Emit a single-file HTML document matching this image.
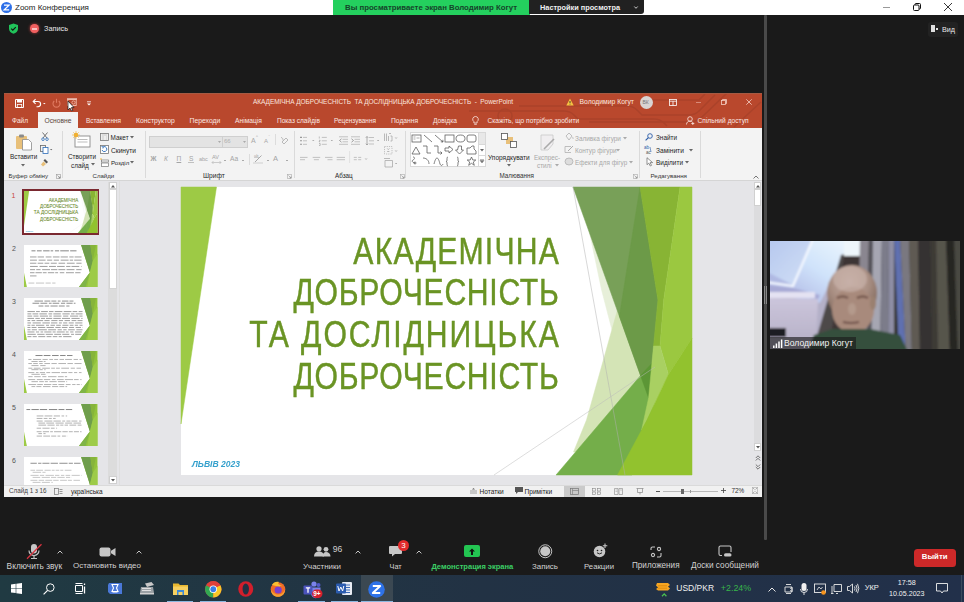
<!DOCTYPE html>
<html><head><meta charset="utf-8">
<style>
*{margin:0;padding:0;box-sizing:border-box}
html,body{width:964px;height:602px;overflow:hidden;background:#1a1a1a;font-family:"Liberation Sans",sans-serif}
.a{position:absolute}
.t{position:absolute;white-space:nowrap;line-height:1}
svg{position:absolute;overflow:visible}
</style></head><body>

<!-- ===== Zoom title bar ===== -->
<div class="a" style="left:0;top:0;width:964px;height:15px;background:#fff"></div>
<svg style="left:1px;top:2px" width="11" height="11" viewBox="0 0 11 11"><circle cx="5.5" cy="5.5" r="5.5" fill="#2d6fe8"/><path d="M3 3.2h5L3.2 7.8h5" stroke="#fff" stroke-width="1.3" fill="none"/></svg>
<div class="t" style="left:15px;top:4.1px;font-size:8px;color:#222">Zoom Конференция</div>
<div class="a" style="left:883px;top:7px;width:7px;height:1px;background:#999"></div>
<svg style="left:913px;top:3px" width="8" height="8" viewBox="0 0 8 8"><rect x="0.5" y="2" width="5.5" height="5.5" rx="1" fill="none" stroke="#111" stroke-width="1"/><path d="M2 2V1.5a1 1 0 0 1 1-1h3.5a1 1 0 0 1 1 1V5a1 1 0 0 1-1 1H6" fill="none" stroke="#111" stroke-width="1"/></svg>
<svg style="left:944px;top:3px" width="8" height="8" viewBox="0 0 8 8"><path d="M0 0L8 8M8 0L0 8" stroke="#222" stroke-width="0.9"/></svg>

<!-- green share banner -->
<div class="a" style="left:333px;top:0;width:197px;height:15px;background:#24d05e"></div>
<div class="t" style="left:345px;top:3.7px;font-size:7.8px;font-weight:bold;color:#15442a">Вы просматриваете экран Володимир Когут</div>
<div class="a" style="left:529px;top:0;width:115px;height:14px;background:#212121;border-radius:0 0 3px 0"></div>
<div class="t" style="left:540px;top:4.1px;font-size:7.35px;font-weight:bold;color:#f0f0f0">Настройки просмотра</div>
<svg style="left:634px;top:6px" width="4" height="3" viewBox="0 0 4 3"><path d="M0.3 0.5L2 2.3L3.7 0.5" stroke="#ddd" stroke-width="0.9" fill="none"/></svg>

<!-- top-left zoom status -->
<svg style="left:8px;top:23px" width="11" height="11" viewBox="0 0 11 11"><path d="M5.5 0.5L10 2v3.5c0 2.8-2 4.5-4.5 5.2C3 10 1 8.3 1 5.5V2z" fill="#21c35a"/><path d="M3.2 5.6l1.6 1.6 3-3" stroke="#111" stroke-width="1.1" fill="none"/></svg>
<div class="a" style="left:30px;top:24px;width:9px;height:9px;border-radius:50%;background:#f06060;box-shadow:0 0 3px #c04040"></div>
<div class="a" style="left:32px;top:27.5px;width:5px;height:2px;background:#fff;opacity:.6"></div>
<div class="t" style="left:44px;top:25.4px;font-size:7.3px;color:#e8e8e8">Запись</div>

<!-- Вид button -->
<div class="a" style="left:928px;top:22px;width:30px;height:15px;background:#222;border-radius:3px"></div>
<div class="a" style="left:931px;top:25px;width:4px;height:7px;background:#e0e0e0"></div>
<div class="a" style="left:936px;top:27.5px;width:2px;height:2px;background:#e0e0e0"></div>
<div class="t" style="left:942px;top:26.1px;font-size:7.2px;color:#e8e8e8">Вид</div>

<!-- separator -->
<div class="a" style="left:764px;top:15px;width:3px;height:525px;background:#4a4a4a;border-radius:1px"></div>

<!-- ===== PowerPoint window ===== -->
<div class="a" style="left:4px;top:93px;width:758px;height:404px;background:#e5e5e8"></div>
<div class="a" style="left:4px;top:93px;width:758px;height:35px;background:#b9482d;border-top:1px solid #a65a42;overflow:hidden">
 <svg style="left:-1px;top:-1px" width="758" height="35" viewBox="4 94 758 35"><g stroke="#a9422a" stroke-width="1.6" fill="none" opacity=".85">
 <path d="M470 112H565Q571 112 575 116L579 120H655Q661 120 665 124L668 127"/>
 <path d="M520 107H628Q634 107 638 111L643 116H690Q696 116 700 112L716 96"/>
 <path d="M590 123H690Q698 123 704 117L728 94"/>
 <path d="M650 101H700L706 95"/>
 <circle cx="506" cy="117" r="7"/>
 <path d="M735 128L762 103"/>
</g></svg>
</div>
<div class="a" style="left:4px;top:128px;width:758px;height:53px;background:#f3f3f3;border-bottom:1px solid #d5d5d5"></div>
<div class="a" style="left:38px;top:112px;width:40px;height:17px;background:#f3f3f3"></div>

<!-- quick access -->
<svg style="left:15px;top:99px" width="9" height="9" viewBox="0 0 9 9"><path d="M.5 .5h8v8h-8z" fill="none" stroke="#fff" stroke-width="1"/><rect x="2" y=".5" width="5" height="3" fill="#fff"/><rect x="2.3" y="5.5" width="4.4" height="3" fill="none" stroke="#fff" stroke-width=".8"/></svg>
<svg style="left:32px;top:98px" width="14" height="10" viewBox="0 0 14 10"><path d="M1.5 3.5h4.5a2.6 2.6 0 0 1 0 5.2H4.5" fill="none" stroke="#fff" stroke-width="1.1"/><path d="M3.6 1.2L1.2 3.5l2.4 2.3" fill="none" stroke="#fff" stroke-width="1.1"/><path d="M11 5l1.3 1.3L13.6 5z" fill="#fff"/></svg>
<svg style="left:52px;top:98px" width="9" height="10" viewBox="0 0 9 10"><path d="M6.8 3a3.5 3.5 0 1 1-4.6 0" fill="none" stroke="#e07a60" stroke-width="1.1"/><path d="M4.5 .8v4" stroke="#e07a60" stroke-width="1.1"/></svg>
<svg style="left:66px;top:98px" width="12" height="10" viewBox="0 0 12 10"><path d="M1 1h10" stroke="#fff" stroke-width="1"/><rect x="1.8" y="1.5" width="8.4" height="6" fill="none" stroke="#f3c0b0" stroke-width=".9"/><circle cx="7.5" cy="4.5" r="1.6" fill="none" stroke="#f3c0b0" stroke-width=".8"/></svg>
<svg style="left:67px;top:100px" width="8" height="12" viewBox="0 0 8 12"><path d="M1 1v9l2-2 1.5 3 1.3-.6L4.4 7.6H7z" fill="#fff" stroke="#111" stroke-width=".7"/></svg>
<svg style="left:86px;top:101px" width="6" height="5" viewBox="0 0 6 5"><path d="M1 .8h4" stroke="#fff" stroke-width=".8"/><path d="M1 2.5L3 4.5 5 2.5z" fill="#fff"/></svg>

<div class="t" style="left:253px;top:98.5px;font-size:6.5px;color:#fbe5df;letter-spacing:-.05px">АКАДЕМІЧНА ДОБРОЧЕСНІСТЬ &nbsp;ТА ДОСЛІДНИЦЬКА ДОБРОЧЕСНІСТЬ &nbsp;- &nbsp;PowerPoint</div>
<svg style="left:566px;top:98px" width="8" height="8" viewBox="0 0 8 8"><path d="M4 .5L7.7 7.5H.3z" fill="#f5c342"/><path d="M4 3v2.3" stroke="#333" stroke-width=".9"/><circle cx="4" cy="6.4" r=".45" fill="#333"/></svg>
<div class="t" style="left:579.5px;top:98.5px;font-size:6.8px;color:#fbe5df">Володимир Когут</div>
<div class="a" style="left:640px;top:96px;width:13px;height:13px;border-radius:50%;background:#d9d4d3"></div>
<div class="t" style="left:642.5px;top:99.5px;font-size:5px;color:#777">ВК</div>
<svg style="left:669px;top:99px" width="8" height="7" viewBox="0 0 8 7"><rect x=".5" y=".5" width="7" height="6" fill="none" stroke="#fff" stroke-width=".8"/><path d="M.5 2.2h7M4 2.2v4.3" stroke="#fff" stroke-width=".8"/></svg>
<div class="a" style="left:696px;top:102px;width:5px;height:1px;background:#d88a78"></div>
<svg style="left:721px;top:99px" width="6" height="6" viewBox="0 0 6 6"><rect x=".5" y="1.5" width="4" height="4" fill="none" stroke="#f6d0c5" stroke-width=".8"/><path d="M1.5 1.5V.5h4v4h-1" fill="none" stroke="#f6d0c5" stroke-width=".8"/></svg>
<svg style="left:746px;top:99px" width="6" height="6" viewBox="0 0 6 6"><path d="M.3 .3l5.4 5.4M5.7 .3L.3 5.7" stroke="#f6d0c5" stroke-width=".8"/></svg>

<!-- tabs -->
<div class="t" style="left:12px;top:118.4px;font-size:6.5px;color:#fbe7e2">Файл</div>
<div class="t" style="left:44.5px;top:118.4px;font-size:6.7px;color:#5a4540">Основне</div>
<div class="t" style="left:86px;top:118.4px;font-size:6.4px;color:#fbe7e2">Вставлення</div>
<div class="t" style="left:136px;top:118.4px;font-size:6.8px;color:#fbe7e2">Конструктор</div>
<div class="t" style="left:189.5px;top:118.4px;font-size:6.8px;color:#fbe7e2">Переходи</div>
<div class="t" style="left:235px;top:118.4px;font-size:6.7px;color:#fbe7e2">Анімація</div>
<div class="t" style="left:277px;top:118.4px;font-size:6.55px;color:#fbe7e2">Показ слайдів</div>
<div class="t" style="left:334px;top:118.4px;font-size:6.45px;color:#fbe7e2">Рецензування</div>
<div class="t" style="left:391px;top:118.4px;font-size:6.7px;color:#fbe7e2">Подання</div>
<div class="t" style="left:433px;top:118.4px;font-size:6.65px;color:#fbe7e2">Довідка</div>
<svg style="left:472px;top:116px" width="7" height="9" viewBox="0 0 7 9"><path d="M3.5 .5a2.8 2.8 0 0 0-1.6 5.1V7h3.2V5.6A2.8 2.8 0 0 0 3.5 .5z" fill="none" stroke="#fbe7e2" stroke-width=".8"/><path d="M2.2 8.3h2.6" stroke="#fbe7e2" stroke-width=".8"/></svg>
<div class="t" style="left:487.5px;top:118.4px;font-size:6.65px;color:#fbe7e2">Скажіть, що потрібно зробити</div>
<svg style="left:686px;top:116px" width="9" height="9" viewBox="0 0 9 9"><circle cx="4" cy="3" r="2.3" fill="none" stroke="#fbe7e2" stroke-width=".8"/><path d="M.5 8.5c0-2.2 1.5-3.3 3.5-3.3 1 0 1.8.2 2.4.7" fill="none" stroke="#fbe7e2" stroke-width=".8"/><path d="M6.8 6v3M5.3 7.5h3" stroke="#fbe7e2" stroke-width=".8"/></svg>
<div class="t" style="left:697.5px;top:118.4px;font-size:6.65px;color:#fbe7e2">Спільний доступ</div>

<!-- ribbon body -->
<!-- Буфер обміну -->
<svg style="left:15px;top:133px" width="18" height="18" viewBox="0 0 18 18"><rect x="1" y="3" width="11" height="13" rx="1" fill="#e8c07a"/><rect x="4" y="1.5" width="5" height="3" rx="1" fill="#8a8a8a"/><path d="M7.5 6.5h6l3 3V17h-9z" fill="#fff" stroke="#8a8a8a" stroke-width=".8"/></svg>
<div class="t" style="left:10px;top:153.5px;font-size:6.4px;color:#262626">Вставити</div>
<svg style="left:21px;top:164px" width="4" height="3" viewBox="0 0 4 3"><path d="M0 0h4L2 2.5z" fill="#666"/></svg>
<div class="t" style="left:8.5px;top:173.0px;font-size:6.2px;color:#333">Буфер обміну</div>
<svg style="left:56px;top:174px" width="5" height="5" viewBox="0 0 5 5"><rect x=".5" y=".5" width="4" height="4" fill="none" stroke="#999" stroke-width=".6"/><path d="M1.5 1.5l2.5 2.5M4 2.5v1.5H2.5" stroke="#777" stroke-width=".6" fill="none"/></svg>
<svg style="left:41px;top:132px" width="8" height="9" viewBox="0 0 8 9"><path d="M1.5 .5L6 6M6.5 .5L2 6" stroke="#555" stroke-width=".8"/><circle cx="2" cy="7.2" r="1.3" fill="none" stroke="#2b6cb8" stroke-width=".8"/><circle cx="6" cy="7.2" r="1.3" fill="none" stroke="#2b6cb8" stroke-width=".8"/></svg>
<svg style="left:40px;top:145px" width="13" height="9" viewBox="0 0 13 9"><rect x=".5" y=".5" width="5" height="6" fill="none" stroke="#666" stroke-width=".8"/><rect x="3" y="2.5" width="5" height="6" fill="#fff" stroke="#2b6cb8" stroke-width=".8"/><path d="M10 4l1.2 1.2L12.4 4z" fill="#666"/></svg>
<svg style="left:40px;top:158px" width="9" height="9" viewBox="0 0 9 9"><path d="M5 1l3 3-1.5 1.5-3-3z" fill="#555"/><path d="M3.5 3.5L6 6 3 8.5 1 6.5z" fill="#e8c07a"/></svg>
<div class="a" style="left:62px;top:131px;width:1px;height:47px;background:#dadada"></div>
<!-- Слайди -->
<svg style="left:72px;top:131px" width="19" height="17" viewBox="0 0 19 17"><rect x="3" y="5" width="15" height="11" fill="#fff" stroke="#8a8a8a" stroke-width=".9"/><path d="M5.5 8.5h10M5.5 11h10" stroke="#bdbdbd" stroke-width="1.2"/><circle cx="4" cy="4" r="2.2" fill="#f0b030"/><path d="M4 0v8M0 4h8M1.2 1.2l5.6 5.6M6.8 1.2L1.2 6.8" stroke="#f0b030" stroke-width=".6"/></svg>
<div class="t" style="left:68px;top:153.5px;font-size:6.4px;color:#262626">Створити</div>
<div class="t" style="left:71px;top:162.5px;font-size:6.4px;color:#262626">слайд</div>
<svg style="left:91px;top:163px" width="4" height="3" viewBox="0 0 4 3"><path d="M0 0h4L2 2.5z" fill="#666"/></svg>
<div class="t" style="left:92.5px;top:173.0px;font-size:6.1px;color:#333">Слайди</div>
<svg style="left:100px;top:133px" width="9" height="8" viewBox="0 0 9 8"><rect x=".5" y=".5" width="8" height="7" fill="#fff" stroke="#777" stroke-width=".8"/><path d="M1.5 2h6M1.5 4h3M5.5 4h2M1.5 6h3M5.5 6h2" stroke="#aaa" stroke-width=".8"/></svg>
<div class="t" style="left:110.5px;top:134.8px;font-size:6.4px;color:#262626">Макет</div>
<svg style="left:130px;top:136px" width="4" height="3" viewBox="0 0 4 3"><path d="M0 0h4L2 2.5z" fill="#666"/></svg>
<svg style="left:100px;top:145px" width="9" height="9" viewBox="0 0 9 9"><rect x=".5" y=".5" width="8" height="8" fill="#fff" stroke="#777" stroke-width=".8"/><path d="M2 5a2.5 2.5 0 1 0 1-3" fill="none" stroke="#2b6cb8" stroke-width=".9"/><path d="M1.5 1.5l1.7.3-.3 1.7" fill="none" stroke="#2b6cb8" stroke-width=".8"/></svg>
<div class="t" style="left:111px;top:147.8px;font-size:6.6px;color:#262626">Скинути</div>
<svg style="left:100px;top:158px" width="9" height="9" viewBox="0 0 9 9"><path d="M0 1h2" stroke="#f0b030" stroke-width=".9"/><rect x="1.5" y="2" width="7" height="2" fill="#fff" stroke="#777" stroke-width=".7"/><rect x="1.5" y="5" width="7" height="3.5" fill="#fff" stroke="#777" stroke-width=".7"/></svg>
<div class="t" style="left:111px;top:159.8px;font-size:6.1px;color:#262626">Розділ</div>
<svg style="left:130px;top:161px" width="4" height="3" viewBox="0 0 4 3"><path d="M0 0h4L2 2.5z" fill="#666"/></svg>
<div class="a" style="left:144.5px;top:131px;width:1px;height:47px;background:#dadada"></div>
<!-- Шрифт -->
<div class="a" style="left:148.5px;top:135.5px;width:74px;height:12px;background:#e3e3e3;border:1px solid #cfcfcf"></div>
<div class="a" style="left:222px;top:135.5px;width:25.5px;height:12px;background:#e3e3e3;border:1px solid #cfcfcf"></div>
<svg style="left:218px;top:140.5px" width="3" height="2" viewBox="0 0 3 2"><path d="M0 0h3L1.5 2z" fill="#aaa"/></svg>
<svg style="left:243px;top:140.5px" width="3" height="2" viewBox="0 0 3 2"><path d="M0 0h3L1.5 2z" fill="#aaa"/></svg>
<div class="t" style="left:224px;top:137.5px;font-size:6px;color:#b0b0b0">66</div>
<div class="t" style="left:251px;top:137.0px;font-size:7px;color:#a8a8a8">A</div><div class="t" style="left:256px;top:134.5px;font-size:4px;color:#a8a8a8">^</div>
<div class="t" style="left:264px;top:138.0px;font-size:6px;color:#a8a8a8">A</div><div class="t" style="left:268.5px;top:134.5px;font-size:4px;color:#a8a8a8">ˇ</div>
<div class="a" style="left:274.5px;top:134px;width:1px;height:11px;background:#dcdcdc"></div>
<svg style="left:280px;top:136px" width="9" height="9" viewBox="0 0 9 9"><path d="M1 1.5c1.5 0 2 1.5 2 3" stroke="#aaa" stroke-width=".8" fill="none"/><path d="M4 8l4-4-2-2-4 4z" fill="none" stroke="#aaa" stroke-width=".8"/></svg>
<div class="t" style="left:150.5px;top:155.5px;font-size:6.6px;color:#a4a4a4;font-weight:bold">Ж</div>
<div class="t" style="left:164px;top:155.5px;font-size:6.6px;color:#a4a4a4;font-style:italic">К</div>
<div class="t" style="left:176.5px;top:155.5px;font-size:6.6px;color:#a4a4a4;text-decoration:underline">П</div>
<div class="t" style="left:189px;top:155.5px;font-size:6.6px;color:#a4a4a4">S</div><div class="a" style="left:188px;top:162.0px;width:6px;height:1px;background:#c0c0c0"></div>
<div class="t" style="left:199px;top:156.5px;font-size:5.5px;color:#a4a4a4">abc</div>
<div class="t" style="left:212px;top:155.0px;font-size:5.5px;color:#a4a4a4">AV</div><svg style="left:212px;top:161.0px" width="9" height="3" viewBox="0 0 9 3"><path d="M0 1.5h9M1.5 0L0 1.5 1.5 3M7.5 0L9 1.5 7.5 3" stroke="#b0b0b0" stroke-width=".6" fill="none"/></svg>
<div class="a" style="left:223.5px;top:159.5px;width:2px;height:1px;background:#aaa"></div>
<div class="t" style="left:230px;top:155.5px;font-size:6.6px;color:#a4a4a4">Aa</div>
<div class="a" style="left:241.5px;top:159.5px;width:2px;height:1px;background:#aaa"></div>
<div class="a" style="left:249px;top:154.0px;width:1px;height:11px;background:#dcdcdc"></div>
<svg style="left:253px;top:153.0px" width="10" height="11" viewBox="0 0 10 11"><path d="M1 4.5h5" stroke="#bbb" stroke-width=".7"/><text x="1" y="4" font-size="4" fill="#aaa" font-family="Liberation Sans">ab</text><path d="M2 9L8.5 2.5" stroke="#aaa" stroke-width="1"/><path d="M0 10h10" stroke="#d6d6d6" stroke-width="1.2"/></svg>
<div class="a" style="left:266.5px;top:159.5px;width:2px;height:1px;background:#aaa"></div>
<div class="t" style="left:273px;top:155.0px;font-size:7.5px;color:#a4a4a4">A</div>
<div class="a" style="left:285.5px;top:159.5px;width:2px;height:1px;background:#aaa"></div>
<div class="t" style="left:203px;top:173.0px;font-size:6.6px;color:#262626">Шрифт</div>
<svg style="left:287px;top:174px" width="5" height="5" viewBox="0 0 5 5"><rect x=".5" y=".5" width="4" height="4" fill="none" stroke="#aaa" stroke-width=".6"/><path d="M1.5 1.5l2.5 2.5M4 2.5v1.5H2.5" stroke="#888" stroke-width=".6" fill="none"/></svg>
<div class="a" style="left:294px;top:131px;width:1px;height:47px;background:#dadada"></div>
<!-- Абзац -->
<svg style="left:295px;top:130px" width="110" height="40" viewBox="0 0 110 40" fill="none" stroke="#b4b4b4" stroke-width=".8">
 <path d="M5 7.4h2M5 10.8h2M5 14.3h2" stroke="#999" stroke-width="1.1"/><path d="M8 7.4h4M8 10.8h4M8 14.3h4"/>
 <path d="M17.5 10l.8.9.8-.9" stroke="#999"/>
 <path d="M24.3 6.5v2M24 10.3h1.2l-1.2 1.5h1.2M24 13.5h1.2v2h-1.2" stroke="#999" stroke-width=".6"/><path d="M26.8 7.4h5M26.8 10.8h5M26.8 14.3h5"/>
 <path d="M36 10l.8.9.8-.9" stroke="#999"/>
 <path d="M44 6.8h9M47.5 9.3h5.5M47.5 11.8h5.5M44 14.3h9"/><path d="M46.5 8.8L44.5 10.5l2 1.7" stroke="#888"/>
 <path d="M56 6.8h9M59.5 9.3h5.5M59.5 11.8h5.5M56 14.3h9"/><path d="M56.5 8.8l2 1.7-2 1.7" stroke="#888"/>
 <path d="M72 6.5v8.5M70.8 7.8L72 6.5l1.2 1.3M70.8 13.7L72 15l1.2-1.3" stroke="#999"/><path d="M74 7.5h5M74 10.8h5M74 14h5"/>
 <path d="M82.3 10l.8.9.8-.9" stroke="#999"/>
 <path d="M5 27.4h7.5M5 29.7h5"/><path d="M17.7 27.4h7.5M18.9 29.7h5"/><path d="M30 27.4h7.5M32.5 29.7h5"/><path d="M41.7 27.4h8.3M41.7 29.7h8.3"/>
 <path d="M54.6 21v12" stroke="#dcdcdc"/>
 <path d="M58.8 27.4h3M63.2 27.4h3M58.8 29.7h3M63.2 29.7h3"/><path d="M70.3 28.5l.8.9.8-.9" stroke="#999"/>
 <path d="M89.5 3.5v7.5M91.5 3.5v7.5M93.5 6v5M95.5 6h1.5v5h-1.5M94 4l1-1 1 1" stroke="#aaa"/><path d="M100.3 7.5l.8.9.8-.9" stroke="#999"/>
 <path d="M89.5 16.5h7.5v7.5h-7.5z" stroke-dasharray="1.2 1"/><path d="M92.3 18.5l1 1 1-1M92.3 22l1-1 1 1" stroke="#999"/><path d="M100.3 20.5l.8.9.8-.9" stroke="#999"/>
 <path d="M89 28.5h6M90 30.5h7.5v6.5H90z" stroke="#aaa"/><path d="M100.3 33l.8.9.8-.9" stroke="#999"/>
</svg>
<div class="t" style="left:335px;top:172.5px;font-size:6.3px;color:#262626">Абзац</div>
<svg style="left:400px;top:174px" width="5" height="5" viewBox="0 0 5 5"><rect x=".5" y=".5" width="4" height="4" fill="none" stroke="#aaa" stroke-width=".6"/><path d="M1.5 1.5l2.5 2.5M4 2.5v1.5H2.5" stroke="#888" stroke-width=".6" fill="none"/></svg>
<div class="a" style="left:405px;top:131px;width:1px;height:47px;background:#dadada"></div>
<!-- Малювання -->
<div class="a" style="left:409.5px;top:132px;width:76px;height:34.5px;background:#fff;border:1px solid #d8d8d8"></div>
<svg style="left:410px;top:133px" width="68" height="33" viewBox="0 0 68 33" stroke="#555" stroke-width=".75" fill="none">
 <rect x="2" y="2" width="9" height="7"/><path d="M3.5 4h2M3.5 6h2M6.5 5h3" stroke="#777" stroke-width=".6"/>
 <path d="M14 2l8 7"/><path d="M25 2l8 7M33 9l-2.2-.2M33 9l-.2-2.2"/>
 <rect x="35" y="2" width="9" height="7"/><ellipse cx="50.5" cy="5.5" rx="4.5" ry="3.5"/><rect x="57" y="2" width="9" height="7" rx="2"/>
 <path d="M2 21l4-7 4 7z"/><path d="M13 13h4v7h4"/><path d="M24 13h4v7h4M30.5 18.5L32 20l-1.5 1.5"/>
 <path d="M35 15h4v-2l4 3.5-4 3.5v-2h-4z"/><path d="M48.5 13h3v4h2l-4 4-4-4h2z"/><path d="M57 21v-6h3l2-2h2v3l2 2v3z"/>
 <path d="M3 24c2 0 2 2 0 3s0 3 2 3"/><circle cx="5" cy="30" r="1"/><path d="M13 25c3 0 6 2 6 6"/><path d="M24 31c2-8 4-8 6 0 1 2 2 2 3 0"/>
 <path d="M38 24c-1 0-1 1-1 3s-1 1.5-1 1.5 1 0 1 1.5 0 3 1 3"/><path d="M47 24c1 0 1 1 1 3s1 1.5 1 1.5-1 0-1 1.5 0 3-1 3"/>
 <path d="M61.5 24l1.3 3h3l-2.5 2 1 3.3-2.8-2-2.8 2 1-3.3-2.5-2h3z"/>
</svg>
<div class="a" style="left:478px;top:133px;width:7px;height:11px;background:#e8e8e8"></div>
<div class="a" style="left:478px;top:144px;width:7px;height:1px;background:#d8d8d8"></div>
<div class="a" style="left:478px;top:155px;width:7px;height:1px;background:#d8d8d8"></div>
<div class="a" style="left:478px;top:133px;width:1px;height:33px;background:#d8d8d8"></div>
<svg style="left:480px;top:149px" width="4" height="3" viewBox="0 0 4 3"><path d="M0 0h4L2 2.5z" fill="#666"/></svg>
<svg style="left:480px;top:159px" width="4" height="4" viewBox="0 0 4 4"><path d="M0 .5h4M0 1.5h4L2 4z" stroke="#777" stroke-width=".5" fill="#777"/></svg>
<svg style="left:501px;top:133px" width="17" height="16" viewBox="0 0 17 16"><rect x="5" y="4" width="7" height="7" fill="#e8c07a"/><rect x=".5" y=".5" width="6" height="6" fill="#fff" stroke="#555" stroke-width=".8"/><rect x="9.5" y="8.5" width="6" height="6" fill="#fff" stroke="#555" stroke-width=".8"/></svg>
<div class="t" style="left:488px;top:154.5px;font-size:6.55px;color:#262626">Упорядкувати</div>
<svg style="left:507px;top:164px" width="4" height="3" viewBox="0 0 4 3"><path d="M0 0h4L2 2.5z" fill="#666"/></svg>
<div class="t" style="left:499.5px;top:173.0px;font-size:6.3px;color:#333">Малювання</div>
<svg style="left:539px;top:134px" width="18" height="17" viewBox="0 0 18 17"><path d="M2 1h12v9l-5 6H2z" fill="#f0eef0" stroke="#c8c8c8" stroke-width=".8"/><path d="M5 15l10-10" stroke="#aaa" stroke-width="1.6"/></svg>
<div class="t" style="left:534px;top:154.5px;font-size:6.35px;color:#a8a8a8">Експрес-</div>
<div class="t" style="left:537px;top:162.5px;font-size:6.35px;color:#a8a8a8">стилі</div>
<svg style="left:555px;top:163.5px" width="4" height="3" viewBox="0 0 4 3"><path d="M0 0h4L2 2.5z" fill="#aaa"/></svg>
<svg style="left:564px;top:132px" width="10" height="9" viewBox="0 0 10 9"><path d="M2 4l3-3 3 3-3 4z" fill="none" stroke="#b0b0b0" stroke-width=".8"/><path d="M8.5 5c.5.8.8 1.5.3 2" stroke="#b0b0b0" stroke-width=".8" fill="none"/></svg>
<div class="t" style="left:575px;top:135.8px;font-size:6.45px;color:#a8a8a8">Заливка фігури</div>
<svg style="left:623px;top:137px" width="4" height="3" viewBox="0 0 4 3"><path d="M0 0h4L2 2.5z" fill="#aaa"/></svg>
<svg style="left:564px;top:145px" width="10" height="8" viewBox="0 0 10 8"><path d="M1 1.5h6M1 1.5v6h6" fill="none" stroke="#b0b0b0" stroke-width=".8"/><path d="M4 6l5-5" stroke="#aaa" stroke-width="1"/></svg>
<div class="t" style="left:575px;top:147.8px;font-size:6.4px;color:#a8a8a8">Контур фігури</div>
<svg style="left:616px;top:149px" width="4" height="3" viewBox="0 0 4 3"><path d="M0 0h4L2 2.5z" fill="#aaa"/></svg>
<svg style="left:564px;top:157px" width="10" height="9" viewBox="0 0 10 9"><ellipse cx="5" cy="4.5" rx="4" ry="3.5" fill="#ddd" stroke="#b0b0b0" stroke-width=".8"/></svg>
<div class="t" style="left:575px;top:159.8px;font-size:6.35px;color:#a8a8a8">Ефекти для фігур</div>
<svg style="left:629px;top:161px" width="4" height="3" viewBox="0 0 4 3"><path d="M0 0h4L2 2.5z" fill="#aaa"/></svg>
<svg style="left:633px;top:174px" width="5" height="5" viewBox="0 0 5 5"><rect x=".5" y=".5" width="4" height="4" fill="none" stroke="#aaa" stroke-width=".6"/><path d="M1.5 1.5l2.5 2.5M4 2.5v1.5H2.5" stroke="#888" stroke-width=".6" fill="none"/></svg>
<div class="a" style="left:638.5px;top:131px;width:1px;height:47px;background:#dadada"></div>
<!-- Редагування -->
<svg style="left:645px;top:133px" width="8" height="8" viewBox="0 0 8 8"><circle cx="5" cy="3" r="2.3" fill="none" stroke="#2b5ca8" stroke-width=".9"/><path d="M3.4 4.6L.6 7.4" stroke="#2b5ca8" stroke-width="1.2"/></svg>
<div class="t" style="left:656px;top:135.3px;font-size:6.4px;color:#262626">Знайти</div>
<svg style="left:644px;top:145px" width="9" height="9" viewBox="0 0 9 9"><text x="0" y="4" font-size="4.5" fill="#2b5ca8" font-family="Liberation Sans">ab</text><text x="2" y="8.5" font-size="4.5" fill="#555" font-family="Liberation Sans">ac</text><path d="M6 2l1 5" stroke="#2b5ca8" stroke-width=".6"/></svg>
<div class="t" style="left:656px;top:147.8px;font-size:6.65px;color:#262626">Замінити</div>
<svg style="left:689px;top:149px" width="4" height="3" viewBox="0 0 4 3"><path d="M0 0h4L2 2.5z" fill="#666"/></svg>
<svg style="left:646px;top:157px" width="8" height="10" viewBox="0 0 8 10"><path d="M1 .7v7l1.8-1.6L4.3 9l1.2-.6L4.1 5.6h2.5z" fill="#fff" stroke="#666" stroke-width=".7"/></svg>
<div class="t" style="left:656px;top:159.8px;font-size:6.45px;color:#262626">Виділити</div>
<svg style="left:684.5px;top:161px" width="4" height="3" viewBox="0 0 4 3"><path d="M0 0h4L2 2.5z" fill="#666"/></svg>
<div class="t" style="left:650.5px;top:173.0px;font-size:6.2px;color:#333">Редагування</div>
<div class="a" style="left:699.5px;top:131px;width:1px;height:47px;background:#dadada"></div>
<svg style="left:753px;top:174.5px" width="6" height="4" viewBox="0 0 6 4"><path d="M.5 3.5L3 1l2.5 2.5" stroke="#555" stroke-width=".8" fill="none"/></svg>


<!-- slides pane -->
<div class="a" style="left:4px;top:181px;width:116px;height:304px;background:#e5e5e8"></div>
<div class="a" style="left:120px;top:181px;width:642px;height:304px;background:#e5e5e8"></div>
<div class="a" style="left:118.5px;top:181px;width:1px;height:304px;background:#dedede"></div>
<!-- thumb scrollbar -->
<div class="a" style="left:108px;top:182px;width:9px;height:302px;background:#dcdcdc"></div>
<div class="a" style="left:108.5px;top:182px;width:8px;height:7px;background:#fff;border:1px solid #d0d0d0"></div>
<svg style="left:110.5px;top:184.5px" width="4" height="3" viewBox="0 0 4 3"><path d="M0 2.5h4L2 0z" fill="#555"/></svg>
<div class="a" style="left:108.5px;top:189px;width:8px;height:100px;background:#fff;border:1px solid #d4d4d4"></div>
<div class="a" style="left:108.5px;top:476px;width:8px;height:8px;background:#fff;border:1px solid #d0d0d0"></div>
<svg style="left:110.5px;top:479px" width="4" height="3" viewBox="0 0 4 3"><path d="M0 0h4L2 2.5z" fill="#555"/></svg>
<!-- main scrollbar -->
<div class="a" style="left:753.5px;top:182px;width:7.5px;height:262px;background:#dcdcde"></div>
<div class="a" style="left:754px;top:182px;width:7px;height:7px;background:#fff;border:1px solid #d0d0d0"></div>
<svg style="left:755.5px;top:184.5px" width="4" height="3" viewBox="0 0 4 3"><path d="M0 2.5h4L2 0z" fill="#555"/></svg>
<div class="a" style="left:754px;top:189px;width:7px;height:17px;background:#fff;border:1px solid #d0d0d0"></div>
<div class="a" style="left:754px;top:443px;width:7px;height:8px;background:#fff;border:1px solid #d0d0d0"></div>
<svg style="left:755.5px;top:446px" width="4" height="3" viewBox="0 0 4 3"><path d="M0 0h4L2 2.5z" fill="#555"/></svg>
<svg style="left:755px;top:455px" width="6" height="6" viewBox="0 0 6 6"><path d="M.8 3L3 .8 5.2 3M.8 5.5L3 3.3 5.2 5.5" stroke="#555" stroke-width=".8" fill="none"/></svg>
<svg style="left:755px;top:464px" width="6" height="6" viewBox="0 0 6 6"><path d="M.8 .5L3 2.7 5.2 .5M.8 3L3 5.2 5.2 3" stroke="#555" stroke-width=".8" fill="none"/></svg>

<!-- thumbnails -->
<div class="a" style="left:21.5px;top:189px;width:77.5px;height:46px;background:#7a2830"></div>
<div class="t" style="left:11.5px;top:191.5px;font-size:7px;color:#c8433a">1</div>
<div class="t" style="left:12px;top:244.5px;font-size:7px;color:#555">2</div>
<div class="t" style="left:12px;top:297.5px;font-size:7px;color:#555">3</div>
<div class="t" style="left:12px;top:351px;font-size:7px;color:#555">4</div>
<div class="t" style="left:12px;top:404px;font-size:7px;color:#555">5</div>
<div class="t" style="left:12px;top:457px;font-size:7px;color:#555">6</div>
<svg style="left:23.5px;top:191px" width="73.5" height="42" viewBox="0 0 511 288" preserveAspectRatio="none"><use href="#facet"/><g fill="#6a8a2a" stroke="#6a8a2a" stroke-width=".6" font-family="Liberation Sans" font-size="37"><text x="172.0" y="77" textLength="205.4" lengthAdjust="spacingAndGlyphs">АКАДЕМІЧНА</text><text x="112.0" y="118.5" textLength="265.4" lengthAdjust="spacingAndGlyphs">ДОБРОЧЕСНІСТЬ</text><text x="68.0" y="160.6" textLength="309.4" lengthAdjust="spacingAndGlyphs">ТА ДОСЛІДНИЦЬКА</text><text x="112.0" y="202.5" textLength="265.4" lengthAdjust="spacingAndGlyphs">ДОБРОЧЕСНІСТЬ</text></g><text x="12" y="280" font-size="9" font-weight="bold" font-style="italic" fill="#35a0cc" font-family="Liberation Sans">ЛЬВІВ 2023</text></svg>
<div class="a" style="left:4px;top:181px;width:116px;height:304px;overflow:hidden"><svg style="left:19.5px;top:calc(-181px + 244.5px)" width="73.5" height="42" viewBox="0 0 511 288" preserveAspectRatio="none"><use href="#facet2"/><path d="M52 40H80M90 40H123M133 40H178M185 40H203M215 40H244M252 40H312M321 40H365" stroke="#666" stroke-width="5.5"/><path d="M42 82H87M95 82H139M151 82H191M201 82H247M255 82H305M315 82H345M352 82H400" stroke="#7a7a7a" stroke-width="5"/><path d="M42 104H90M102 104H150M161 104H196M207 104H243M255 104H310M318 104H341M349 104H400" stroke="#7a7a7a" stroke-width="5"/><path d="M42 125H86M95 125H134M143 125H176M186 125H228M240 125H286M298 125H352M364 125H400" stroke="#7a7a7a" stroke-width="5"/><path d="M42 147H96M108 147H164M174 147H222M230 147H283M293 147H323M330 147H384M396 147H400" stroke="#7a7a7a" stroke-width="5"/><path d="M42 169H77M85 169H115M126 169H181M188 169H232M239 169H287M296 169H351M363 169H400" stroke="#7a7a7a" stroke-width="5"/><path d="M42 190H73M80 190H124M131 190H157M166 190H210M217 190H237M249 190H280M292 190H347M356 190H393" stroke="#7a7a7a" stroke-width="5"/><path d="M42 212H87" stroke="#7a7a7a" stroke-width="5"/><path d="M31 261H72M83 261H140M150 261H186M196 261H219" stroke="#9a9a9a" stroke-width="4"/></svg>
<svg style="left:19.5px;top:calc(-181px + 297.5px)" width="73.5" height="42" viewBox="0 0 511 288" preserveAspectRatio="none"><use href="#facet2"/><path d="M73 21H132M142 21H183M190 21H225M235 21H254M264 21H309M316 21H344" stroke="#666" stroke-width="5"/><path d="M59 36H106M114 36H162M173 36H192M199 36H245M257 36H286M295 36H338M346 36H358" stroke="#666" stroke-width="5"/><path d="M101 55H135M144 55H175M184 55H234M242 55H283M294 55H316" stroke="#666" stroke-width="5"/><path d="M24 93H76M84 93H110M119 93H166M174 93H205M214 93H267M276 93H330M338 93H370M380 93H407" stroke="#7a7a7a" stroke-width="5"/><path d="M24 109H51M59 109H99M107 109H159M170 109H196M204 109H256M267 109H318M327 109H351M359 109H407" stroke="#7a7a7a" stroke-width="5"/><path d="M24 124H57M66 124H101M110 124H167M175 124H193M205 124H260M272 124H308M320 124H377M385 124H407" stroke="#7a7a7a" stroke-width="5"/><path d="M24 140H70M79 140H110M118 140H146M153 140H196M204 140H256M264 140H320M330 140H387M398 140H407" stroke="#7a7a7a" stroke-width="5"/><path d="M24 155H43M53 155H78M87 155H133M142 155H178M190 155H233M242 155H271M282 155H320M331 155H364M372 155H407" stroke="#7a7a7a" stroke-width="5"/><path d="M24 171H49M60 171H117M128 171H180M188 171H232M243 171H263M272 171H301M311 171H346M356 171H406" stroke="#7a7a7a" stroke-width="5"/><path d="M24 187H44M52 187H75M83 187H141M153 187H174M184 187H215M224 187H256M267 187H309M318 187H344M353 187H376M386 187H407" stroke="#7a7a7a" stroke-width="5"/><path d="M24 202H45M53 202H87M97 202H148M157 202H208M218 202H255M263 202H302M313 202H348M359 202H396M405 202H407" stroke="#7a7a7a" stroke-width="5"/><path d="M24 218H45M54 218H90M101 218H159M168 218H223M234 218H263M273 218H296M307 218H353M364 218H407" stroke="#7a7a7a" stroke-width="5"/><path d="M24 233H73M83 233H105M115 233H133M141 233H191M199 233H220M228 233H283M291 233H310M321 233H344M355 233H402" stroke="#7a7a7a" stroke-width="5"/><path d="M24 249H82M92 249H143M151 249H201M210 249H258M266 249H315M327 249H348M356 249H398" stroke="#7a7a7a" stroke-width="5"/><path d="M24 265H52M60 265H89M99 265H148M157 265H191M200 265H232M241 265H263M272 265H330" stroke="#7a7a7a" stroke-width="5"/></svg>
<svg style="left:19.5px;top:calc(-181px + 351px)" width="73.5" height="42" viewBox="0 0 511 288" preserveAspectRatio="none"><use href="#facet2"/><path d="M80 31H129M137 31H184M195 31H241M251 31H289M299 31H337" stroke="#666" stroke-width="5.5"/><path d="M30 58H52M63 58H119M129 58H165M176 58H202M210 58H237M247 58H278M286 58H333M345 58H375M386 58H400" stroke="#8a8a8a" stroke-width="4.5"/><path d="M52 72H95M103 72H130M137 72H150" stroke="#8a8a8a" stroke-width="4.5"/><path d="M30 86H55M64 86H96M106 86H130M142 86H181M191 86H228M239 86H292M302 86H340M351 86H400" stroke="#8a8a8a" stroke-width="4.5"/><path d="M52 100H101M113 100H150" stroke="#8a8a8a" stroke-width="4.5"/><path d="M30 118H58M68 118H115M127 118H180M189 118H215M223 118H249M259 118H313M325 118H354M365 118H396" stroke="#8a8a8a" stroke-width="4.5"/><path d="M52 128H101M108 128H130M141 128H150" stroke="#8a8a8a" stroke-width="4.5"/><path d="M30 148H72M83 148H101M110 148H146M155 148H182M192 148H250M259 148H300M308 148H337M348 148H370M382 148H400" stroke="#8a8a8a" stroke-width="4.5"/><path d="M52 160H110M118 160H150" stroke="#8a8a8a" stroke-width="4.5"/><path d="M30 176H60M71 176H116M127 176H156M167 176H226M236 176H276M284 176H300" stroke="#8a8a8a" stroke-width="4.5"/><path d="M30 196H78M89 196H130M138 196H183M194 196H219M230 196H276M284 196H341M348 196H380M391 196H400" stroke="#8a8a8a" stroke-width="4.5"/><path d="M52 210H97M106 210H138M145 210H166M177 210H227M236 210H285M294 210H300" stroke="#8a8a8a" stroke-width="4.5"/><path d="M30 230H85M92 230H131M139 230H190M198 230H230M239 230H280M291 230H324M335 230H358M366 230H388M396 230H400" stroke="#8a8a8a" stroke-width="4.5"/><path d="M52 244H78M86 244H121M132 244H184M195 244H238M246 244H280M288 244H300" stroke="#8a8a8a" stroke-width="4.5"/></svg>
<svg style="left:19.5px;top:calc(-181px + 404px)" width="73.5" height="42" viewBox="0 0 511 288" preserveAspectRatio="none"><use href="#facet2"/><path d="M17 38H43M52 38H103M110 38H161M173 38H231M240 38H281M291 38H335" stroke="#666" stroke-width="5.5"/><path d="M88 82H135M143 82H197M207 82H250M261 82H279M290 82H300" stroke="#8a8a8a" stroke-width="4.5"/><path d="M88 99H128M137 99H163M173 99H193M202 99H220" stroke="#8a8a8a" stroke-width="4.5"/><path d="M88 117H130M142 117H197M205 117H256M266 117H286M295 117H323M330 117H371M383 117H400" stroke="#8a8a8a" stroke-width="4.5"/><path d="M100 131H147M155 131H209M219 131H276M286 131H335M344 131H396" stroke="#8a8a8a" stroke-width="4.5"/><path d="M100 145H154M163 145H213M223 145H245M252 145H274M282 145H306M316 145H363M373 145H400" stroke="#8a8a8a" stroke-width="4.5"/><path d="M88 166H119M128 166H178M187 166H213M224 166H230" stroke="#8a8a8a" stroke-width="4.5"/><path d="M88 190H122M131 190H174M182 190H201M209 190H259M267 190H304M312 190H339M347 190H382M390 190H400" stroke="#8a8a8a" stroke-width="4.5"/><path d="M100 203H125M135 203H150" stroke="#8a8a8a" stroke-width="4.5"/><path d="M88 220H125M134 220H181M189 220H224M233 220H252M264 220H291M298 220H300" stroke="#8a8a8a" stroke-width="4.5"/></svg>
<svg style="left:19.5px;top:calc(-181px + 457px)" width="73.5" height="42" viewBox="0 0 511 288" preserveAspectRatio="none"><use href="#facet2"/><path d="M45 43H89M98 43H121M128 43H177M185 43H236M246 43H303M311 43H340M348 43H393" stroke="#666" stroke-width="5"/><path d="M45 91H77M85 91H132M143 91H186M193 91H213M220 91H245M252 91H273M283 91H330" stroke="#a0a0a0" stroke-width="4"/><path d="M60 105H119M128 105H150" stroke="#a0a0a0" stroke-width="4"/><path d="M45 126H102M110 126H140M150 126H208M216 126H246M257 126H280M289 126H321M331 126H388M396 126H400" stroke="#a0a0a0" stroke-width="4"/><path d="M60 140H113M123 140H180M188 140H224M232 140H283M292 140H321M329 140H330" stroke="#a0a0a0" stroke-width="4"/><path d="M45 160H93M102 160H140M148 160H196M203 160H241M251 160H298M305 160H333M344 160H389" stroke="#a0a0a0" stroke-width="4"/><path d="M60 174H115M124 174H180M190 174H200" stroke="#a0a0a0" stroke-width="4"/></svg>
</div>
<div class="a" style="left:4px;top:485px;width:116px;height:0;"></div><!-- main slide -->
<svg style="left:0;top:0;width:0;height:0"><defs>
<g id="facet">
 <rect width="511" height="288" fill="#fff"/>
 <polygon points="0.0,0.0 35.5,0.0 0.0,237.0" fill="#9dca45" stroke="#9dca45" stroke-width=".5"/>
 <polygon points="408.0,43.0 438.4,129.0 431.0,143.0 420.6,103.0" fill="#e7efd9" stroke="#e7efd9" stroke-width=".5"/>
 <polygon points="437.0,121.0 459.5,188.6 395.3,265.0 392.5,265.0 405.5,233.0" fill="#d4e4b6" stroke="#d4e4b6" stroke-width=".5"/>
 <polygon points="392.0,0.0 459.0,0.0 476.9,113.0 467.6,211.0" fill="#78a058" stroke="#78a058" stroke-width=".5"/>
 <polygon points="459.0,0.0 438.4,129.0 467.6,211.0 476.9,113.0" fill="#6c9a48" stroke="#6c9a48" stroke-width=".5"/>
 <polygon points="459.0,0.0 499.0,0.0 482.7,113.0 479.0,159.0 472.5,159.0 476.9,113.0" fill="#88b434" stroke="#88b434" stroke-width=".5"/>
 <polygon points="499.0,0.0 511.0,0.0 511.0,151.0 487.4,187.4 479.0,159.0 482.7,113.0" fill="#9bc840" stroke="#9bc840" stroke-width=".5"/>
 <polygon points="375.0,288.0 451.0,288.0 475.0,211.0 459.5,188.6" fill="#74ae4a" stroke="#74ae4a" stroke-width=".5"/>
 <polygon points="459.5,188.6 473.4,173.5 467.6,211.0" fill="#5c9636" stroke="#5c9636" stroke-width=".5"/>
 <polygon points="472.5,159.0 479.0,159.0 487.4,187.4 466.0,233.0 460.6,243.0 467.6,211.0" fill="#a9d062" stroke="#a9d062" stroke-width=".5"/>
 <polygon points="436.5,288.0 511.0,288.0 511.0,151.0 487.4,187.4 466.0,233.0" fill="#92c22e" stroke="#92c22e" stroke-width=".5"/>
 <path d="M392 0L444 288" stroke="#b0b0b0" stroke-width=".5" fill="none"/>
 <path d="M313 288L474 180" stroke="#bbb" stroke-width=".5" fill="none"/>
</g>
<g id="facet2">
 <rect width="511" height="288" fill="#fff"/>
 <polygon points="397,0 511,0 511,288 382,288 458,189" fill="#92c23a"/>
 <polygon points="397,0 462,0 478,110 458,189" fill="#6f9e4c"/>
 <polygon points="462,0 500,0 478,110" fill="#86b43a"/>
 <polygon points="458,189 478,110 511,60 511,288 440,288" fill="#9dcb48"/>
 <polygon points="458,189 428,288 382,288" fill="#7fb446"/>
 <polygon points="0,190 0,288 20,288" fill="#9dca45"/>
</g>
</defs></svg>
<svg style="left:181px;top:187px" width="511" height="288" viewBox="0 0 511 288"><use href="#facet"/></svg>
<div class="t" style="right:404.44px;top:233.8px;font-size:36.8px;color:#6a9424;-webkit-text-stroke:.45px #6a9424;letter-spacing:1.42px;transform:scaleX(0.82);transform-origin:100% 0">АКАДЕМІЧНА</div>
<div class="t" style="right:404.92px;top:275.3px;font-size:36.8px;color:#6a9424;-webkit-text-stroke:.45px #6a9424;letter-spacing:0.83px;transform:scaleX(0.82);transform-origin:100% 0">ДОБРОЧЕСНІСТЬ</div>
<div class="t" style="right:403.68px;top:317.4px;font-size:36.8px;color:#6a9424;-webkit-text-stroke:.45px #6a9424;letter-spacing:2.34px;transform:scaleX(0.82);transform-origin:100% 0">ТА ДОСЛІДНИЦЬКА</div>
<div class="t" style="right:404.92px;top:359.3px;font-size:36.8px;color:#6a9424;-webkit-text-stroke:.45px #6a9424;letter-spacing:0.83px;transform:scaleX(0.82);transform-origin:100% 0">ДОБРОЧЕСНІСТЬ</div>

<div class="t" style="left:192px;top:459.6px;font-size:9.2px;font-weight:bold;font-style:italic;color:#35a0cc;transform:scaleX(.93);transform-origin:0 0">ЛЬВІВ 2023</div>

<!-- status bar -->
<div class="a" style="left:4px;top:485px;width:758px;height:12px;background:#f1f1f1;border-top:1px solid #dadada"></div>
<div class="t" style="left:9px;top:488.3px;font-size:6.3px;color:#444">Слайд 1 з 16</div>
<svg style="left:54px;top:487.5px" width="9" height="7" viewBox="0 0 9 7"><rect x=".5" y=".5" width="4" height="6" fill="none" stroke="#777" stroke-width=".7"/><path d="M5.5 1.5h3M5.5 3.5h3M5.5 5.5h3" stroke="#777" stroke-width=".7"/></svg>
<div class="t" style="left:71px;top:488.6px;font-size:6.45px;color:#222">українська</div>
<svg style="left:470px;top:488px" width="7" height="6" viewBox="0 0 7 6"><path d="M2 1.5L3.5 0 5 1.5z" fill="#666"/><path d="M0 3h7M0 5h7" stroke="#888" stroke-width=".8"/></svg>
<div class="t" style="left:479.5px;top:488.8px;font-size:6.55px;color:#222">Нотатки</div>
<svg style="left:515px;top:487px" width="8" height="8" viewBox="0 0 8 8"><path d="M0 0h8v5H3L1 7V5H0z" fill="#555"/></svg>
<div class="t" style="left:524.5px;top:488.8px;font-size:6.6px;color:#222">Примітки</div>
<div class="a" style="left:563.5px;top:485.5px;width:21px;height:11.5px;background:#cacaca"></div>
<svg style="left:570px;top:487.5px" width="9" height="7" viewBox="0 0 9 7"><rect x=".5" y=".5" width="8" height="6" fill="none" stroke="#777" stroke-width=".7"/><path d="M2.5 .5v6M2.5 2.5h6" stroke="#777" stroke-width=".6"/></svg>
<svg style="left:592px;top:487.5px" width="9" height="7" viewBox="0 0 9 7"><rect x=".5" y=".5" width="3" height="2.5" fill="none" stroke="#888" stroke-width=".6"/><rect x="5.5" y=".5" width="3" height="2.5" fill="none" stroke="#888" stroke-width=".6"/><rect x=".5" y="4" width="3" height="2.5" fill="none" stroke="#888" stroke-width=".6"/><rect x="5.5" y="4" width="3" height="2.5" fill="none" stroke="#888" stroke-width=".6"/></svg>
<svg style="left:614px;top:487.5px" width="9" height="7" viewBox="0 0 9 7"><path d="M.5 .5h3.5v6H.5zM5 .5h3.5v6H5z" fill="none" stroke="#888" stroke-width=".6"/><path d="M1.5 2h2M1.5 3.5h2M6 2h2" stroke="#999" stroke-width=".5"/></svg>
<svg style="left:636px;top:487.5px" width="8" height="7" viewBox="0 0 8 7"><path d="M.5 .5h7M1.5 .5v4h5v-4M4 4.5v2" fill="none" stroke="#888" stroke-width=".7"/></svg>
<div class="a" style="left:655.5px;top:490.5px;width:4px;height:1px;background:#555"></div>
<div class="a" style="left:663px;top:490.5px;width:55px;height:1px;background:#b8b8b8"></div>
<div class="a" style="left:681px;top:488.5px;width:2.5px;height:5px;background:#666"></div>
<div class="a" style="left:690px;top:489.5px;width:1px;height:3px;background:#999"></div>
<svg style="left:720.5px;top:488px" width="5" height="5" viewBox="0 0 5 5"><path d="M2.5 0v5M0 2.5h5" stroke="#444" stroke-width=".8"/></svg>
<div class="t" style="left:731.5px;top:488.3px;font-size:6.4px;color:#333">72%</div>
<svg style="left:752px;top:487px" width="6" height="7" viewBox="0 0 6 7"><rect x=".3" y=".3" width="5.4" height="6.4" fill="none" stroke="#aaa" stroke-width=".6"/><path d="M1.2 1.2l1.2 1.2M4.8 1.2L3.6 2.4M1.2 5.8l1.2-1.2M4.8 5.8L3.6 4.6" stroke="#666" stroke-width=".6"/></svg>


<!-- ===== video tile ===== -->
<svg style="left:770px;top:241px;overflow:hidden" width="190" height="108" viewBox="0 0 190 108">
<defs>
 <filter id="bl" x="-5%" y="-5%" width="110%" height="110%"><feGaussianBlur stdDeviation="1.2"/></filter>
 <linearGradient id="ceil" x1="0" y1="0" x2="1" y2="1"><stop offset="0" stop-color="#b4c6ee"/><stop offset="1" stop-color="#d2e0f6"/></linearGradient>
 <linearGradient id="ceil2" x1="0" y1="1" x2="1" y2="0"><stop offset="0" stop-color="#a4a8dc"/><stop offset=".5" stop-color="#cfe2fa"/><stop offset="1" stop-color="#f4fcff"/></linearGradient>
 <radialGradient id="head" cx=".45" cy=".3" r=".65"><stop offset="0" stop-color="#c6aea6"/><stop offset=".6" stop-color="#a88e82"/><stop offset="1" stop-color="#846c60"/></radialGradient>
 <linearGradient id="wall" x1="0" y1="0" x2="0" y2="1"><stop offset="0" stop-color="#ccc6dc"/><stop offset="1" stop-color="#b8b2c8"/></linearGradient>
</defs>
<g filter="url(#bl)">
 <rect x="-5" y="-5" width="200" height="120" fill="#b4b0c8"/>
 <polygon points="-5,-5 95,-5 95,30 72,18 50,62 -5,52" fill="url(#ceil2)"/>
 <polygon points="-5,-5 43,-5 23,44 -5,41" fill="url(#ceil)"/><polygon points="-5,30 23,44 -5,41" fill="#a4a8d8" opacity=".6"/>
 <path d="M43 -2L23 45L-5 41" stroke="#f4f8ff" stroke-width="2.2" fill="none"/>
 <polygon points="-5,44 23,47 50,54 48,58 -5,52" fill="#a8aad6"/>
 <rect x="-5" y="51" width="50" height="6" fill="#e4e2f2"/>
 <polygon points="-5,57 48,58 46,100 -5,100" fill="url(#wall)"/>
 <rect x="-5" y="87" width="21" height="9" fill="#1e1e22"/>
 <polygon points="71,14 79,12 62,95 47,95" fill="#4e4848"/>
 <polygon points="74,14 92,8 92,100 60,100" fill="#3e3636"/>
 <rect x="74" y="-5" width="18" height="20" fill="#eef6fb"/>
 <rect x="90" y="-5" width="105" height="120" fill="#353432"/>
 <polygon points="90,-5 99,-5 97,115 88,115" fill="#8a8690"/>
 <polygon points="99,-5 103,-5 101,115 97,115" fill="#55525a"/>
 <polygon points="103,-5 112,-5 110,115 101,115" fill="#a6a6b2"/>
 <polygon points="112,-5 119,-5 118,115 110,115" fill="#7c7c8a"/>
 <polygon points="119,-5 124,-5 124,115 118,115" fill="#8e8ea4"/>
 <polygon points="124,-5 130,-5 136,115 129,115" fill="#5e70b0"/>
 <polygon points="130,-5 139,-5 142,115 136,115" fill="#7a7880"/>
 <polygon points="139,-5 148,-5 150,115 142,115" fill="#5e5a52"/>
 <polygon points="148,-5 160,-5 162,115 150,115" fill="#343230"/>
 <polygon points="160,-5 166,-5 168,115 162,115" fill="#3c3a36"/>
 <polygon points="166,-5 176,-5 180,115 168,115" fill="#56544c"/>
 <polygon points="176,-5 184,-5 188,115 180,115" fill="#262624"/>
 <polygon points="184,-5 195,-5 195,115 188,115" fill="#4a4a42"/>
 <ellipse cx="82" cy="52" rx="25" ry="28" fill="url(#head)"/>
 <ellipse cx="83" cy="69" rx="21" ry="23" fill="#a88a7c"/>
 <ellipse cx="80" cy="38" rx="17" ry="13" fill="#c8b0a8" opacity=".7"/>
 <ellipse cx="103" cy="62" rx="3" ry="7" fill="#9a8070"/>
 <path d="M67 57q6-3 11 0M87 57q6-3 11 0" stroke="#76584e" stroke-width="2.6" fill="none"/>
 <ellipse cx="82" cy="68" rx="4" ry="6" fill="#b49a8c"/>
 <path d="M73 81q8 2 16 0" stroke="#6e5048" stroke-width="2" fill="none"/>
 <polygon points="36,115 44,94 62,88 100,88 130,94 140,115" fill="#34503c"/>
</g>
<rect x="0" y="96" width="86" height="12" fill="#1c1c1c" opacity=".65"/>
<path d="M3.8 107v-2.4M6.4 107v-4.4M9 107v-6.4M11.6 107v-8.4" stroke="#fff" stroke-width="1.5"/>
</svg>
<div class="a" style="left:764.3px;top:285.7px;width:.8px;height:18px;background:#8a8a8a"></div>
<div class="a" style="left:766px;top:285.7px;width:.8px;height:18px;background:#8a8a8a"></div>
<div class="t" style="left:784px;top:338.5px;font-size:8.6px;color:#f2f2f2">Володимир Когут</div>

<!-- ===== taskbar ===== -->
<!-- ===== taskbar ===== -->
<!-- ===== zoom toolbar ===== -->
<svg style="left:26px;top:543px" width="16" height="17" viewBox="0 0 16 17"><rect x="5" y="1" width="6" height="9.5" rx="3" fill="#c6c6c6"/><path d="M3 7.5a5 5 0 0 0 10 0" stroke="#c6c6c6" stroke-width="1.2" fill="none"/><path d="M8 12.5v2.5M5 15.5h6" stroke="#c6c6c6" stroke-width="1.2"/><path d="M1 15.8L15.5 1.2" stroke="#d8333f" stroke-width="1.3"/></svg>
<div class="t" style="left:6.6px;top:562.1px;font-size:8.34px;color:#d2d2d2;">Включить звук</div>
<svg style="left:57px;top:549.5px" width="6" height="4" viewBox="0 0 6 4"><path d="M.6 3.4L3 1 5.4 3.4" stroke="#c8c8c8" stroke-width="1" fill="none"/></svg>
<svg style="left:98.5px;top:546.5px" width="17" height="10" viewBox="0 0 17 10"><rect x=".5" y=".5" width="11" height="9" rx="2" fill="#c6c6c6"/><path d="M12 3.8L16.5 1v8L12 6.2z" fill="#c6c6c6"/></svg>
<div class="t" style="left:73px;top:562.4px;font-size:7.98px;color:#d2d2d2;">Остановить видео</div>
<svg style="left:135.5px;top:549.5px" width="6" height="4" viewBox="0 0 6 4"><path d="M.6 3.4L3 1 5.4 3.4" stroke="#c8c8c8" stroke-width="1" fill="none"/></svg>
<svg style="left:314px;top:546px" width="17" height="11" viewBox="0 0 17 11"><circle cx="5" cy="2.8" r="2.6" fill="#c6c6c6"/><path d="M0 10.5c0-3.2 2-5 5-5s5 1.8 5 5z" fill="#c6c6c6"/><circle cx="12" cy="3.3" r="2.4" fill="#c6c6c6"/><path d="M8.5 10.5c.3-3 1.4-4.6 3.5-4.6 2.5 0 4.5 1.6 4.5 4.6z" fill="#c6c6c6"/></svg>
<div class="t" style="left:332.8px;top:545px;font-size:8.6px;color:#d0d0d0">96</div>
<div class="t" style="left:303px;top:562.5px;font-size:7.95px;color:#d2d2d2;">Участники</div>
<svg style="left:354.5px;top:549.5px" width="6" height="4" viewBox="0 0 6 4"><path d="M.6 3.4L3 1 5.4 3.4" stroke="#c8c8c8" stroke-width="1" fill="none"/></svg>
<svg style="left:389px;top:545px" width="15" height="12" viewBox="0 0 15 12"><path d="M1 1h11a1 1 0 0 1 1 1v6a1 1 0 0 1-1 1H6l-3 2.5V9H1a1 1 0 0 1-1-1V2a1 1 0 0 1 1-1z" fill="#c6c6c6"/></svg>
<div class="a" style="left:397.8px;top:540.2px;width:11px;height:11px;border-radius:50%;background:#e22b2b"></div>
<div class="t" style="left:401.3px;top:541.5px;font-size:8px;color:#fff">3</div>
<div class="t" style="left:389.6px;top:563.0px;font-size:7.29px;color:#d2d2d2;">Чат</div>
<svg style="left:415.5px;top:549.5px" width="6" height="4" viewBox="0 0 6 4"><path d="M.6 3.4L3 1 5.4 3.4" stroke="#c8c8c8" stroke-width="1" fill="none"/></svg>
<div class="a" style="left:463.6px;top:545.3px;width:16.6px;height:11.4px;border-radius:2px;background:#23c552"></div>
<svg style="left:468px;top:547.5px" width="8" height="7" viewBox="0 0 8 7"><path d="M4 .5L1 3.5h2V7h2V3.5h2z" fill="#111"/></svg>
<div class="t" style="left:431.4px;top:562.8px;font-size:7.53px;color:#3ccf66;font-weight:bold;">Демонстрация экрана</div>
<svg style="left:538px;top:544px" width="14.5" height="14.5" viewBox="0 0 14.5 14.5"><circle cx="7.25" cy="7.25" r="6.5" fill="none" stroke="#c6c6c6" stroke-width="1"/><circle cx="7.25" cy="7.25" r="5" fill="#c6c6c6"/></svg>
<div class="t" style="left:532px;top:562.5px;font-size:7.92px;color:#d2d2d2;">Запись</div>
<svg style="left:592.5px;top:543px" width="15" height="15" viewBox="0 0 15 15"><circle cx="6.5" cy="8.5" r="5.8" fill="#c6c6c6"/><circle cx="4.5" cy="7.5" r=".8" fill="#1a1a1a"/><circle cx="8.5" cy="7.5" r=".8" fill="#1a1a1a"/><path d="M4 9.8q2.5 2.2 5 0" stroke="#1a1a1a" stroke-width=".9" fill="none"/><path d="M12 .5v4.5M9.8 2.8h4.5" stroke="#c6c6c6" stroke-width="1.1"/></svg>
<div class="t" style="left:584px;top:562.6px;font-size:7.77px;color:#d2d2d2;">Реакции</div>
<svg style="left:649.5px;top:545.5px" width="12" height="12" viewBox="0 0 12 12" fill="none" stroke="#c6c6c6" stroke-width="1.1"><path d="M1 4V2.5A1.5 1.5 0 0 1 2.5 1H5M7 11h2.5A1.5 1.5 0 0 0 11 9.5V7"/><circle cx="9" cy="3" r="1.6"/><circle cx="3" cy="9" r="1.6"/></svg>
<div class="t" style="left:632px;top:562.3px;font-size:8.15px;color:#d2d2d2;">Приложения</div>
<svg style="left:718px;top:544.5px" width="14" height="12" viewBox="0 0 14 12"><path d="M4 10.5H2.5A1.5 1.5 0 0 1 1 9V2.5A1.5 1.5 0 0 1 2.5 1h9A1.5 1.5 0 0 1 13 2.5V7" stroke="#c6c6c6" stroke-width="1.1" fill="none"/><rect x="6" y="8.3" width="7.5" height="3.2" rx="1.6" fill="#c6c6c6"/></svg>
<div class="t" style="left:691px;top:562.2px;font-size:8.24px;color:#d2d2d2;">Доски сообщений</div>
<div class="a" style="left:914.4px;top:548.5px;width:41.4px;height:18.2px;border-radius:3.5px;background:#cd2929"></div>
<div class="t" style="left:921.8px;top:553.2px;font-size:7.80px;color:#fff;font-weight:bold;">Выйти</div>

<!-- ===== taskbar ===== -->
<div class="a" style="left:0;top:575px;width:964px;height:27px;background:linear-gradient(90deg,#203a42,#223244 50%,#22304a)"></div>
<div class="a" style="left:361px;top:575px;width:32px;height:27px;background:#3b4852"></div>
<div class="a" style="left:167px;top:600.5px;width:26px;height:1.5px;background:#8cb8e0"></div>
<div class="a" style="left:199.5px;top:600.5px;width:26px;height:1.5px;background:#8cb8e0"></div>
<div class="a" style="left:298px;top:600.5px;width:26.5px;height:1.5px;background:#8cb8e0"></div>
<div class="a" style="left:331px;top:600.5px;width:26.5px;height:1.5px;background:#8cb8e0"></div>
<div class="a" style="left:361px;top:600.5px;width:32px;height:1.5px;background:#8cb8e0"></div>
<svg style="left:10.8px;top:583px" width="11" height="11" viewBox="0 0 11 11"><path d="M0 1.5L4.7 .8v4.2H0zM5.3 .7L11 0v5H5.3zM0 5.6h4.7v4.4L0 9.4zM5.3 5.6H11V11l-5.7-.8z" fill="#fff"/></svg>
<svg style="left:43px;top:582.5px" width="12" height="12" viewBox="0 0 12 12"><circle cx="7.3" cy="4.6" r="3.8" fill="none" stroke="#fff" stroke-width="1"/><path d="M4.6 7.3L.6 11.3" stroke="#fff" stroke-width="1.1"/></svg>
<svg style="left:74.8px;top:583px" width="11" height="11" viewBox="0 0 11 11" fill="none" stroke="#fff" stroke-width="1"><path d="M.5 2.5h7v6h-7zM.5 .5h7M.5 10.5h7"/><path d="M9.5 .5v1.5M9.5 3.5v7" stroke-width="1.3"/></svg>
<svg style="left:107px;top:582px" width="16" height="13" viewBox="0 0 16 13"><path d="M2 1h13v11H3L1 10V3z" fill="#4a78d8"/><path d="M5 2.5h6l-1.5 3.5 1.5 3.5H5l1.5-3.5z" fill="none" stroke="#fff" stroke-width="1.1"/><path d="M5.5 10h5" stroke="#fff" stroke-width="1"/></svg>
<svg style="left:138.5px;top:582px" width="17" height="13" viewBox="0 0 17 13"><path d="M6 1.5L12.5 0 15 3 8 5z" fill="#c8c8c8"/><path d="M2 5h12l1 6H1z" fill="#9aa0a4"/><path d="M3 6.5h9M3 8.5h9" stroke="#e6e6e6" stroke-width=".9"/><rect x="1" y="11" width="14" height="1.5" fill="#d0d0d0"/></svg>
<svg style="left:172.5px;top:582px" width="15" height="13" viewBox="0 0 15 13"><path d="M0 1.5h5.5l1.5 1.5H15V13H0z" fill="#e8b830"/><path d="M0 4.5h15V13H0z" fill="#f6d060"/><path d="M4 8h7v5H9.5v-3h-4v3H4z" fill="#3a88d8"/></svg>
<svg style="left:204.5px;top:580.5px" width="16.5" height="16.5" viewBox="0 0 16 16"><circle cx="8" cy="8" r="8" fill="#e0403a"/><path d="M8 8L1.1 4A8 8 0 0 0 8 16z" fill="#32a852"/><path d="M8 8L8 16A8 8 0 0 0 14.9 4z" fill="#f8c828"/><path d="M8 4.5h6.9A8 8 0 0 0 1.1 4z" fill="#e0403a"/><circle cx="8" cy="8" r="3.6" fill="#fff"/><circle cx="8" cy="8" r="2.8" fill="#3a7ee8"/></svg>
<svg style="left:238px;top:580.5px" width="15.5" height="16" viewBox="0 0 15.5 16"><ellipse cx="7.75" cy="8" rx="7.5" ry="7.8" fill="#d21f2c"/><ellipse cx="7.75" cy="8" rx="3.2" ry="5.6" fill="#223244"/></svg>
<svg style="left:270px;top:580.8px" width="16" height="16" viewBox="0 0 16 16"><circle cx="8" cy="8.5" r="7.3" fill="#f06a28"/><path d="M2 4C3 1 7 0 9 1c-1 1-1 2 0 2.5 2 .5 3 1 3.5 2.5C11 4 9 5 10 6" fill="#fbbf30"/><circle cx="8.2" cy="9" r="3.6" fill="#7a3ed0"/><path d="M1 8.5C1 13 4 15.8 8 15.8s7-3 7-7.3c-1 3-4 5-7 5S2 11 1 8.5z" fill="#f7a030"/></svg>
<svg style="left:302.5px;top:580.5px" width="19.5" height="17" viewBox="0 0 19.5 17"><circle cx="11" cy="3" r="2.6" fill="#7b83eb"/><circle cx="15.5" cy="4" r="2" fill="#5059c9"/><path d="M8 6.5h9.5v6a4 4 0 0 1-9.5 0z" fill="#7b83eb"/><rect x=".5" y="4.5" width="9" height="9" rx="1" fill="#4b53bc"/><path d="M2.8 6.8h4.4M5 6.8v5" stroke="#fff" stroke-width="1.3"/><rect x="9" y="8.5" width="10.5" height="8.5" rx="4.2" fill="#d4202e"/><text x="10.2" y="15.3" font-size="6.4" font-weight="bold" fill="#fff" font-family="Liberation Sans">9+</text></svg>
<svg style="left:336px;top:582px" width="16" height="13" viewBox="0 0 16 13"><rect x="6" y="0" width="10" height="13" rx="1" fill="#e8ecf4"/><path d="M8 3h6M8 5.5h6M8 8h6M8 10.5h6" stroke="#3a6ab8" stroke-width="1"/><rect x="0" y="1.5" width="10" height="10" rx="1" fill="#2b5cb0"/><path d="M1.8 4l1.2 5 1.8-4 1.8 4 1.2-5" stroke="#fff" stroke-width="1" fill="none"/></svg>
<svg style="left:368px;top:580.5px" width="17" height="17" viewBox="0 0 17 17"><circle cx="8.5" cy="8.5" r="8.3" fill="#2e72e8"/><path d="M4.8 5h7.4L4.8 12h7.4" stroke="#fff" stroke-width="1.9" fill="none" stroke-linejoin="round"/></svg>
<svg style="left:654.5px;top:580.5px" width="16" height="16" viewBox="0 0 16 16"><path d="M2 2h11l2 2-2 1.5 2 2-2 2H3L1 8l2-1.5L1 4.5z" fill="#f5a623"/><path d="M3 4.8h9M3 7.2h9" stroke="#d68000" stroke-width=".7"/><path d="M7 15.2l2.2-2.3 2.2 2.3" stroke="#4cc050" stroke-width="1.3" fill="none"/></svg>
<div class="t" style="left:676.3px;top:584px;font-size:8.5px;color:#f0f0f0">USD/PKR</div>
<div class="t" style="left:720.8px;top:584px;font-size:8.9px;color:#38b54a">+2.24%</div>
<svg style="left:768px;top:586.5px" width="8" height="5" viewBox="0 0 8 5"><path d="M.5 4.5L4 1l3.5 3.5" stroke="#e8e8e8" stroke-width="1" fill="none"/></svg>
<svg style="left:784px;top:582.5px" width="9" height="12" viewBox="0 0 9 12" fill="none" stroke="#e8e8e8" stroke-width=".9"><path d="M2 1.5h5M1 4h7v5H1zM2 10.5h5"/><path d="M6 5.5l2-1v4l-2-1"/></svg>
<svg style="left:800px;top:582.5px" width="8" height="12" viewBox="0 0 8 12"><rect x="1.5" y="0" width="5" height="8" rx="2.5" fill="#f0f0f0"/><path d="M.5 6a3.5 3.5 0 0 0 7 0M4 9.5V12" stroke="#f0f0f0" stroke-width=".9" fill="none"/></svg>
<svg style="left:814px;top:582.5px" width="13" height="12" viewBox="0 0 13 12"><rect x=".5" y="1" width="11" height="8.5" fill="none" stroke="#e8e8e8" stroke-width=".9"/><path d="M3 7l2-3 2 2 1.5-2" stroke="#e8e8e8" stroke-width=".8" fill="none"/><circle cx="9.5" cy="9.5" r="2.3" fill="#f7941d"/></svg>
<svg style="left:831px;top:582.5px" width="11" height="12" viewBox="0 0 11 12" fill="none" stroke="#e8e8e8" stroke-width=".9"><path d="M3 1.5h7.5v7H3z"/><path d="M1 3v7M0 10.5h2.5M5 10.5h2"/></svg>
<svg style="left:846.5px;top:583px" width="12" height="11" viewBox="0 0 12 11" fill="none" stroke="#e8e8e8" stroke-width=".9"><path d="M.5 3.5h2L5.5 1v9L2.5 7.5h-2z"/><path d="M7.5 3.5q1 2 0 4M9 2q2 3.5 0 7M10.5 .8q2.6 4.7 0 9.4"/></svg>
<div class="t" style="left:864.7px;top:584px;font-size:7.5px;color:#f0f0f0">УКР</div>
<div class="t" style="left:897.8px;top:578.8px;font-size:7.2px;color:#f0f0f0">17:58</div>
<div class="t" style="left:889px;top:590.6px;font-size:7.1px;color:#f0f0f0">10.05.2023</div>
<svg style="left:936px;top:583px" width="12" height="11" viewBox="0 0 12 11"><path d="M.5 .5h11v7.5H7.5L6 10 4.5 8H.5z" fill="none" stroke="#f0f0f0" stroke-width=".9"/></svg>
<div class="a" style="left:961px;top:575px;width:1px;height:27px;background:#3a4a5c"></div>


</body></html>
